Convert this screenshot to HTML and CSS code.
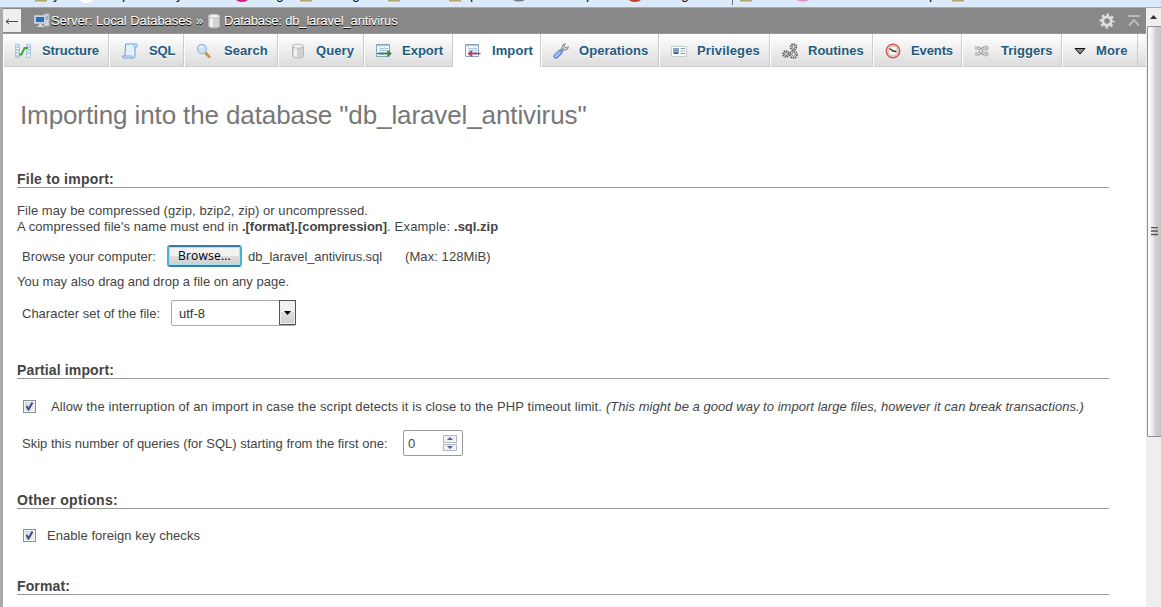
FILE: index.html
```
<!DOCTYPE html>
<html lang="en">
<head>
<meta charset="utf-8">
<title>Import - db_laravel_antivirus</title>
<link rel="stylesheet" href="styles.css">
</head>
<body>
<svg class="bookmarks" width="1161" height="8" viewBox="0 0 1161 8">
  <g fill="#b5a66c"><path d="M35 0h12v1.500H35zM300 0h12v1.500H300zM388 0h12v1.500H388zM449 0h12v1.500H449zM740 0h12v1.500H740zM952 0h12v1.500H952z"/></g>
  <path d="M80 0h13q-2 3-6.500 3T80 0z" fill="#fff"/>
  <path d="M236 0h12q-2 2-6 2t-6-2z" fill="#d71b83"/>
  <path d="M513 0h12q-2 1.500-6 1.500T513 0z" fill="#777b86"/>
  <path d="M629 0h12q-2 2-6 2t-6-2z" fill="#c83b30"/>
  <path d="M797 0h12q-2 1.500-6 1.500T797 0z" fill="#dd8fce"/>
  <path d="M732.500 0v5" stroke="#6b7480"/>
  <g class="bookmark-text"><text x="53" y="-1">y</text><text x="122" y="-1">p</text><text x="176" y="-1">y</text><text x="276" y="-1">g</text><text x="352" y="-1">g</text><text x="470" y="-1">p</text><text x="586" y="-1">p</text><text x="681" y="-1">g</text><text x="929" y="-1">p</text></g>
</svg>
<div class="window">
  <div class="gutter"></div>
  <main class="page">
    <header class="crumbs">
      <span class="back"><svg width="18" height="23"><path d="M3 12.500h12M6 10l-3 2.500L6 15" fill="none" stroke="#444"/></svg></span>
      <svg class="crumb-icon server" width="16" height="16"><path d="M10 1h5v12h-5z" fill="#d5d9dd" stroke="#aeb4ba"/><path d="M11 4h3M11 6h3" stroke="#7b858e"/><path d="M.5 2.500h11v8H.5z" fill="#c7d4e1" stroke="#b4c4d4"/><path d="M2 4h8v5H2z" fill="#326db4"/><path d="M5 11h3v2H5zM3 13h7v1H3z" fill="#d6dadd"/></svg>
      <span class="crumb crumb-server">Server: Local Databases</span>
      <span class="crumb arrows">»</span>
      <svg class="crumb-icon db" width="16" height="16"><use href="#cyl"/></svg>
      <span class="crumb crumb-db">Database: db_laravel_antivirus</span>
      <span class="spacer"></span>
      <svg class="gear" width="16" height="16" viewBox="0 0 16 16"><g fill="none" stroke="#ddd"><circle cx="8" cy="8" r="4.200" stroke-width="2.800"/><circle cx="8" cy="8" r="6.300" stroke-width="2.400" stroke-dasharray="2.550 2.398" stroke-dashoffset="1.270"/></g></svg>
      <svg class="totop" width="12" height="12"><path d="M0 1h12" stroke="#bbb" stroke-width="2"/><path d="M1 10.500L6 5l5 5.500" fill="none" stroke="#bbb" stroke-width="2"/></svg>
    </header>
    <nav class="tabs">
      <a class="tab t-structure"><svg width="16" height="16"><path d="M.5 1.500h4v13h-4zM11.500 1.500h4v13h-4z" fill="#eef5fb" stroke="#a9c5dc"/><path d="M1 4h3M1 7h3M1 10h3M1 13h3M12 4h3M12 7h3M12 10h3" stroke="#8cabc7"/><path d="M4 11.500h2.500L9.500 5H13" fill="none" stroke="#44a63c" stroke-width="2"/></svg><span>Structure</span></a>
      <a class="tab t-sql"><svg width="16" height="16"><path d="M3.500 1h10.500q1.500 0 1.500 1.500T14 4h-1v9q0 2-2 2H2q-1.500 0-1.500-2H3z" fill="#e4f1fc" stroke="#69a0d5"/><path d="M12.500 1.500q-1 1 0 2.500M3 13h7q0 2 1 2" fill="none" stroke="#7caedd"/></svg><span>SQL</span></a>
      <a class="tab t-search"><svg width="16" height="16"><path d="M9 9.500l5 5" stroke="#cf8c42" stroke-width="2.500"/><circle cx="6" cy="6" r="4.500" fill="#cbe5fa" stroke="#a8bed4" stroke-width="1.500"/><path d="M3.500 5q1-2 3-1.500" stroke="#fff" fill="none"/></svg><span>Search</span></a>
      <a class="tab t-query"><svg width="16" height="16"><g id="cyl"><path d="M2.500 3v10q0 2 5.500 2t5.500-2V3z" fill="#d2d2d2" stroke="#b7b7b7"/><path d="M4 5h3v9H5Q4 13.500 4 13z" fill="#f4f4f4"/><ellipse cx="8" cy="3.200" rx="5.500" ry="2" fill="#f0f0f0" stroke="#bcbcbc"/></g></svg><span>Query</span></a>
      <a class="tab t-export"><svg width="16" height="16"><g id="sheet"><path d="M.5 1.500h13v12H.5z" fill="#f7faff" stroke="#86a4c2"/><path d="M1 2.500h12" stroke="#a9c5e2"/><path d="M3 5.500h9M3 7.500h9M3 9.500h9M3 11.500h9" stroke="#a3bfdb"/><path d="M3.500 3v10M8.500 3v10" stroke="#d3e0ec"/></g><path d="M1 10.500h13M11.500 8l3 2.500-3 2.500" stroke="#388d2a" stroke-width="1.700" fill="none"/></svg><span>Export</span></a>
      <a class="tab active t-import"><svg width="16" height="16"><use href="#sheet"/><path d="M15.500 10.500H4M7 8l-3 2.500L7 13" stroke="#df303a" stroke-width="1.700" fill="none"/></svg><span>Import</span></a>
      <a class="tab t-operations"><svg width="16" height="16"><path d="M6.500 9.500L11 5" stroke="#8f98a2" stroke-width="3.500"/><path d="M12.500.8Q9 1 9 4q0 3 3 3 3.500 0 3.500-3.500L13 5l-2-2z" fill="#cdd3d8" stroke="#858e98"/><path d="M3 13.200l3.800-3.800" stroke="#5583ce" stroke-width="5" stroke-linecap="round"/><path d="M3 13l3.500-3.500" stroke="#9fc0f1" stroke-width="3" stroke-linecap="round"/></svg><span>Operations</span></a>
      <a class="tab t-privileges"><svg width="16" height="16"><path d="M.5 3.500h15v10H.5z" fill="#fcfdfd" stroke="#c4cfd2"/><path d="M2 5h6v6H2z" fill="#78aadd"/><circle cx="5" cy="7" r="1.500" fill="#bd925b"/><path d="M3 11q0-2 2-2t2 2z" fill="#385f96"/><path d="M9.500 5.500H14M9.500 8H12M9.500 10.500H14M13 8h1" stroke="#8c9a9f"/></svg><span>Privileges</span></a>
      <a class="tab t-routines"><svg width="16" height="16"><g fill="none" stroke="#555" stroke-width="1.600" stroke-dasharray="1.500 .8"><circle cx="11.500" cy="4" r="3"/><circle cx="4" cy="11" r="3"/><circle cx="11.500" cy="11.500" r="3.500"/></g><g fill="#fff" stroke="#555" stroke-width=".8"><circle cx="11.500" cy="4" r="1.500"/><circle cx="4" cy="11" r="1.500"/><circle cx="11.500" cy="11.500" r="1.700"/></g></svg><span>Routines</span></a>
      <a class="tab t-events"><svg width="16" height="16"><circle cx="8" cy="8" r="6.700" fill="#f8f4f2" stroke="#d95652" stroke-width="1.500"/><circle cx="8" cy="8" r="5" fill="none" stroke="#bdb2ae"/><path d="M4.500 5.500L8 8l3.500.5" fill="none" stroke="#333" stroke-width="1.500"/></svg><span>Events</span></a>
      <a class="tab t-triggers"><svg width="16" height="16"><path d="M1 5h3q1.500 0 3 3t3 3h4M1 11h3q1.500 0 3-3t3-3h4" fill="none" stroke="#999" stroke-width="3"/><path d="M11.500 2.500l3 2.500-3 2.500M11.500 8.500l3 2.500-3 2.500" fill="none" stroke="#999"/><path d="M1 5h3q1.500 0 3 3t3 3h4M1 11h3q1.500 0 3-3t3-3h4" fill="none" stroke="#eee"/></svg><span>Triggers</span></a>
      <a class="tab t-more"><svg width="16" height="16"><path d="M3 5.500h10L8 11z" fill="#888" stroke="#111"/></svg><span>More</span></a>
    </nav>
    <h1>Importing into the database "db_laravel_antivirus"</h1>
    <section class="file">
      <h2 class="h-file">File to import:</h2>
      <p class="notes"><span class="n1">File may be compressed (gzip, bzip2, zip) or uncompressed.</span><br><span class="n2">A compressed file's name must end in </span><b class="n3">.[format].[compression]</b><span class="n4">. Example: </span><b>.sql.zip</b></p>
      <div class="row browse"><label>Browse your computer:</label><button>Browse...</button><span class="filename">db_laravel_antivirus.sql</span><span class="max">(Max: 128MiB)</span></div>
      <p class="drag">You may also drag and drop a file on any page.</p>
      <div class="row charset"><label>Character set of the file:</label><span class="select"><span>utf-8</span><i><svg width="7" height="4"><path d="M0 0h7L3.500 4z"/></svg></i></span></div>
    </section>
    <section class="partial">
      <h2 class="h-partial">Partial import:</h2>
      <div class="row allow"><span class="check"><svg width="9" height="9"><path d="M1.500 4l2 3.500 4-7" fill="none" stroke="#3d4f91" stroke-width="2"/></svg></span><span class="allow-text">Allow the interruption of an import in case the script detects it is close to the PHP timeout limit.</span><em>(This might be a good way to import large files, however it can break transactions.)</em></div>
      <div class="row skip"><label>Skip this number of queries (for SQL) starting from the first one:</label><span class="number"><span>0</span><span class="spin"><i><svg width="6" height="3"><path d="M0 3h6L3 0z"/></svg></i><i><svg width="6" height="3"><path d="M0 0h6L3 3z"/></svg></i></span></span></div>
    </section>
    <section class="other">
      <h2 class="h-other">Other options:</h2>
      <div class="row fk"><span class="check"><svg width="9" height="9"><path d="M1.500 4l2 3.500 4-7" fill="none" stroke="#3d4f91" stroke-width="2"/></svg></span><span class="fk-text">Enable foreign key checks</span></div>
    </section>
    <section class="format"><h2 class="h-format">Format:</h2></section>
  </main>
  <aside class="scrollbar">
    <span class="up"><svg width="7" height="4"><path d="M0 4h7L3.500 0z" fill="#333"/></svg></span>
    <span class="thumb"><svg width="7" height="9"><path d="M0 .5h7M0 4h7M0 7.500h7" stroke="#555" stroke-width="1.500"/></svg></span>
  </aside>
</div>
</body>
</html>
```
FILE: styles.css
```
* { box-sizing: border-box; }
body { margin: 0; height: 607px; overflow: hidden; background: #fff; color: #444; font: 13px/16px "Liberation Sans", Arial, sans-serif; }
svg { display: block; flex: none; }
.bookmarks { background: linear-gradient(#dbe9f8 0 7px, #a3abb4 7px); overflow: hidden; }
.bookmark-text { font-size: 14px; fill: #111; }
.window { display: flex; height: 599px; }
.gutter { width: 3px; background: #aaa; }
.page { width: 1143px; overflow: hidden; }

.crumbs { display: flex; align-items: center; height: 26px; background: #888; border-bottom: 1px solid #999; padding-right: 6px; color: #fff; white-space: nowrap; }
.back { width: 18px; height: 23px; background: #eee; }
.crumb { text-shadow: 0 1px 0 #000; }
.crumb-icon.server { margin-left: 13px; margin-right: 1px; }
.crumb-server { width: 145px; letter-spacing: -.07px; }
.arrows { width: 10px; }
.crumb-icon.db { margin-right: 2px; }
.crumb-db { letter-spacing: -.167px; }
.spacer { flex: 1; }
.gear { margin-right: 13px; }

.tabs { display: grid; grid-template-columns: 106px 75px 94px 86px 89px 88px 118px 111px 103px 89px 100px 76px 1fr; height: 33px; background: linear-gradient(#fff, #dcdcdc); border-bottom: 1px solid #ccc; }
.tab { display: flex; align-items: center; padding-left: 12px; border-right: 1px solid #ccc; box-shadow: inset 1px 0 #fff; color: #235a81; font-weight: bold; white-space: nowrap; text-shadow: 0 1px 0 #fff; }
.tab svg { margin-right: 11px; }
.tab.active { background: #fff; height: 33px; }
.t-structure { letter-spacing: -.089px; }
.t-sql { letter-spacing: -.2px; padding-left: 13px; }
.t-search { letter-spacing: .07px; }
.t-search svg { margin-right: 12px; }
.t-query { letter-spacing: .084px; }
.t-query svg { margin-right: 10px; }
.t-export { letter-spacing: 0; }
.t-export svg { margin-right: 10px; }
.t-import { letter-spacing: .1px; }
.t-operations { letter-spacing: .06px; }
.t-operations svg { margin-right: 10px; }
.t-privileges { letter-spacing: .15px; }
.t-privileges svg { margin-right: 10px; }
.t-routines { letter-spacing: 0; }
.t-routines svg { margin-right: 10px; }
.t-events { letter-spacing: -.107px; }
.t-events svg { margin-right: 10px; }
.t-triggers { letter-spacing: .03px; }
.t-more { letter-spacing: .1px; padding-left: 10px; }
.t-more svg { margin-right: 8px; }

h1 { margin: 33px 0 0 17px; height: 30px; color: #777; font-size: 26px; line-height: 30px; font-weight: normal; letter-spacing: -.11px; white-space: nowrap; }
section { margin-left: 14px; width: 1092px; }
h2 { margin: 0; height: 18px; border-bottom: 1px solid #999; color: #444; font-size: 14px; line-height: 18px; }
.h-file { letter-spacing: .245px; }
.h-partial { letter-spacing: .14px; }
.h-other { letter-spacing: .326px; }
.h-format { letter-spacing: .125px; }
p { margin: 0; }
.row { display: flex; align-items: center; padding-left: 5px; white-space: nowrap; }
.file { height: 191px; margin-top: 40px; }
.notes { padding-top: 15px; height: 56px; white-space: pre; }
.n1 { letter-spacing: .06px; }
.n2 { letter-spacing: .077px; }
.n3 { letter-spacing: -.039px; }
.n4 { letter-spacing: .179px; }
.browse { height: 24px; }
.browse label, .browse span { padding-top: 2px; }
.browse label { width: 145px; }
.browse button { width: 75px; height: 22px; padding: 0; border: 2px solid #3c9cc0; border-color: #377da0 #43b4d9 #377da0; border-radius: 3px; box-shadow: inset 0 0 0 1px #a9e4f6; background: linear-gradient(#f2f2f2 50%, #ddd 50%, #cfcfcf); color: #000; font: 12px/16px "Open Sans", sans-serif; letter-spacing: .2px; }
.filename { margin-left: 6px; width: 157px; letter-spacing: -.077px; }
.max { letter-spacing: .08px; }
.drag { padding-top: 6px; height: 32px; }
.charset { height: 26px; }
.charset label { width: 149px; padding-top: 2px; }
.select { display: flex; justify-content: space-between; width: 125px; height: 26px; border: 1px solid #aaa; border-radius: 2px; line-height: 25px; padding-left: 7px; color: #333; }
.select i { display: grid; place-items: center; width: 17px; height: 25px; margin: -1px -1px 0; border: 1px solid #555; background: linear-gradient(#f1f1f1 50%, #ddd 50%, #d0d0d0); box-shadow: inset 0 0 0 1px #eee; }

.partial { height: 130px; }
.allow { height: 20px; margin-top: 18px; }
.check { display: grid; place-items: center; width: 13px; height: 13px; margin: 0 0 2px 1px; border: 1px solid #8e8f8f; background: linear-gradient(135deg, #ccd5df, #f6f6f6); box-shadow: inset 0 0 0 1px #f4f4f4; }
.allow-text { margin-left: 15px; width: 555px; letter-spacing: .108px; }
.allow em { letter-spacing: .039px; }
.skip { height: 26px; margin-top: 13px; }
.skip label { width: 381px; padding-top: 1px; }
.number { display: flex; justify-content: space-between; width: 60px; height: 26px; border: 1px solid #999; border-radius: 2px; padding: 4px 5px 4px 4px; }
.number > span:first-child { line-height: 18px; }
.spin { display: flex; flex-direction: column; gap: 1px; width: 14px; height: 16px; }
.spin i { display: grid; place-items: center; flex: 1; border: 1px solid #b2b6be; background: #f0f1f4; }
.spin path { fill: #46609d; }

.other { height: 86px; }
.fk { height: 20px; margin-top: 17px; }
.fk-text { margin-left: 11px; letter-spacing: .049px; }

.scrollbar { width: 15px; background: #eee; }
.up { display: grid; place-items: center; height: 18px; background: #f0f0f0; }
.thumb { display: grid; place-items: center; width: 14px; height: 411px; margin-left: 1px; border: 1px solid #8f8f8f; border-right: 0; border-radius: 2px 0 0 2px; background: linear-gradient(90deg, #fff, #ececee 35%, #cfcfd4 60%, #c4c4ca); }
```
